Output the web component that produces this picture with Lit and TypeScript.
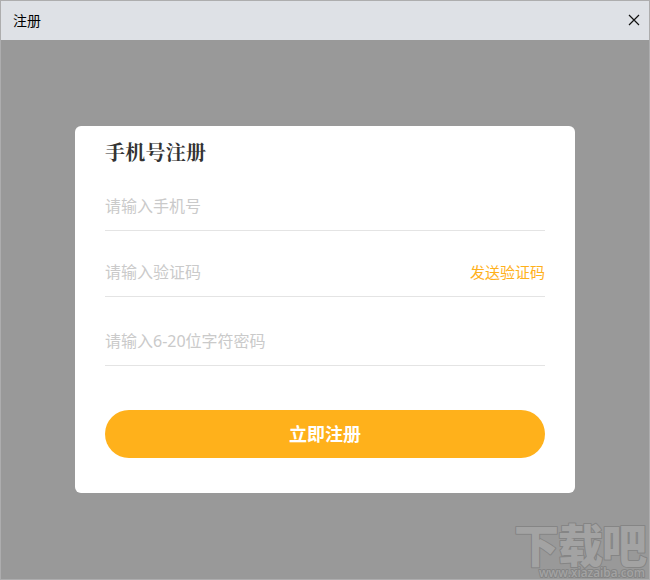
import { LitElement, html, css } from "lit";
import { customElement, property } from "lit/decorators.js";

@customElement("form-field")
class FormField extends LitElement {
  @property() hint = "";
  @property() type = "text";
  static styles = css`
    :host { display: flex; align-items: center; height: 48px; border-bottom: 1px solid #e4e4e4; }
    input { flex: 1; min-width: 0; height: 24px; border: 0; padding: 0; outline: 0; background: none; font: 16px/24px "Noto Sans", "Noto Sans CJK SC", sans-serif; color: #333; }
    input::placeholder { color: #cacaca; opacity: 1; }
  `;
  render() {
    return html`<input type=${this.type} placeholder=${this.hint} /><slot></slot>`;
  }
}

@customElement("app-root")
class AppRoot extends LitElement {
  static styles = css`
    :host { display: flex; flex-direction: column; position: relative; box-sizing: border-box; height: 580px; border: 1px solid #adadae; background: #999; font-family: "Noto Sans CJK SC", sans-serif; overflow: hidden; }
    .bar { box-sizing: border-box; display: flex; align-items: center; justify-content: space-between; height: 39px; padding: 0 9px 2px 12px; background: #dee1e6; font-size: 14px; color: #000; flex: none; }
    .close { display: block; width: 12px; height: 12px; }
    .main { flex: 1; display: flex; justify-content: center; align-items: flex-start; padding-top: 86px; }
    .card { box-sizing: border-box; width: 500px; height: 366.5px; padding: 12px 30px; border-radius: 6px; background: #fff; }
    h1 { margin: 0 0 16px; font-family: "Noto Serif CJK SC", "Noto Sans CJK SC", serif; font-size: 20px; line-height: 28px; letter-spacing: 0.25px; font-weight: 700; color: #333; }
    .code { margin-top: 17px; }
    .password { margin-top: 20px; }
    .send { border: 0; padding: 0; background: none; font: 15px/24px "Noto Sans CJK SC", sans-serif; color: #ffb11b; }
    .submit { display: block; width: 100%; height: 48px; margin-top: 44px; padding: 0 0 2px; border: 0; border-radius: 24px; background: #ffb11b; color: #fff; font: 700 18px/24px "Noto Sans CJK SC", sans-serif; }
    .mark { position: absolute; right: 0; bottom: 0; width: 136px; height: 60px; }
    .name { font: 900 45px "Noto Sans CJK SC", sans-serif; }
    .site { font: 600 12.5px "Open Sans", sans-serif; }
    .mark text { fill: #a3a3a3; stroke: #858585; stroke-width: 2px; stroke-linejoin: round; paint-order: stroke; }
  `;
  render() {
    return html`
      <header class="bar"><span>注册</span>
        <svg class="close" viewBox="0 0 12 12"><path d="M1 1L11 11M11 1L1 11" stroke="#111" stroke-width="1.2" fill="none" /></svg>
      </header>
      <main class="main">
        <section class="card">
          <h1>手机号注册</h1>
          <form-field hint="请输入手机号"></form-field>
          <form-field class="code" hint="请输入验证码"><button class="send">发送验证码</button></form-field>
          <form-field class="password" type="password" hint="请输入6-20位字符密码"></form-field>
          <button class="submit">立即注册</button>
        </section>
      </main>
      <svg class="mark" viewBox="0 0 136 60">
        <text class="name" x="1" y="44" textLength="133">下载吧</text>
        <text class="site" x="26" y="58" textLength="106" lengthAdjust="spacingAndGlyphs">www.xiazaiba.com</text>
      </svg>
    `;
  }
}
